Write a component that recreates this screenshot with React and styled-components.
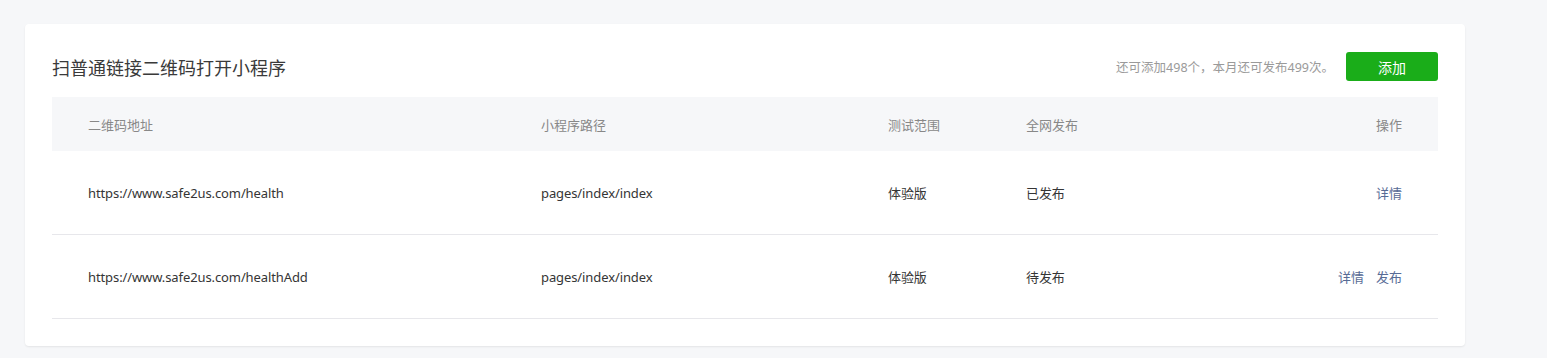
import React from "react";
import styled, { createGlobalStyle } from "styled-components";

const GlobalStyle = createGlobalStyle`
  html, body {
    margin: 0;
    padding: 0;
    background: #f6f7f9;
    font-family: "Noto Sans", "Noto Sans CJK SC", sans-serif;
    color: #353535;
  }
`;

const Page = styled.div`
  padding: 24px 25px;
`;

const Card = styled.section`
  width: 1440px;
  box-sizing: border-box;
  background: #fff;
  border-radius: 4px;
  box-shadow: 0 1px 2px rgba(0, 0, 0, 0.08);
  padding: 28px 27px 27px;
`;

const Header = styled.div`
  display: flex;
  align-items: center;
  justify-content: space-between;
  height: 29px;
  margin-bottom: 16px;
`;

const Title = styled.h2`
  margin: 0;
  font-size: 18px;
  font-weight: 400;
  color: #3a3a3a;
`;

const Actions = styled.div`
  display: flex;
  align-items: center;
  gap: 12px;
`;

const Tips = styled.span`
  font-size: 12.5px;
  color: #9a9a9a;
`;

const AddButton = styled.button`
  width: 92px;
  height: 29px;
  border: none;
  border-radius: 3px;
  background: #1aad19;
  color: #fff;
  font-family: inherit;
  font-size: 14px;
  font-weight: 400;
  cursor: pointer;
`;

const Table = styled.div`
  display: grid;
  grid-template-columns: 453px 347px 138px 1fr auto;
`;

const HeadCell = styled.div`
  display: flex;
  align-items: center;
  justify-content: ${(p) => (p.$right ? "flex-end" : "flex-start")};
  height: 54px;
  padding: 0 36px;
  background: #f6f7f9;
  font-size: 13px;
  color: #888;
`;

const Cell = styled.div`
  display: flex;
  align-items: center;
  justify-content: ${(p) => (p.$right ? "flex-end" : "flex-start")};
  gap: 12px;
  height: 83px;
  padding: 0 36px;
  border-bottom: 1px solid #e7e7eb;
  font-size: 13px;
  letter-spacing: -0.1px;
  color: #353535;
`;

const LinkBtn = styled.a`
  color: #576b95;
  text-decoration: none;
  letter-spacing: 0;
  cursor: pointer;
`;

const rows = [
  { url: "https://www.safe2us.com/health", path: "pages/index/index", range: "体验版", status: "已发布", ops: ["详情"] },
  { url: "https://www.safe2us.com/healthAdd", path: "pages/index/index", range: "体验版", status: "待发布", ops: ["详情", "发布"] },
];

export default function App() {
  return (
    <>
      <GlobalStyle />
      <Page>
        <Card>
          <Header>
            <Title>扫普通链接二维码打开小程序</Title>
            <Actions>
              <Tips>还可添加498个，本月还可发布499次。</Tips>
              <AddButton>添加</AddButton>
            </Actions>
          </Header>
          <Table>
            <HeadCell>二维码地址</HeadCell>
            <HeadCell>小程序路径</HeadCell>
            <HeadCell>测试范围</HeadCell>
            <HeadCell>全网发布</HeadCell>
            <HeadCell $right>操作</HeadCell>
            {rows.map((r) => (
              <React.Fragment key={r.url}>
                <Cell>{r.url}</Cell>
                <Cell>{r.path}</Cell>
                <Cell>{r.range}</Cell>
                <Cell>{r.status}</Cell>
                <Cell $right>
                  {r.ops.map((o) => (
                    <LinkBtn key={o}>{o}</LinkBtn>
                  ))}
                </Cell>
              </React.Fragment>
            ))}
          </Table>
        </Card>
      </Page>
    </>
  );
}
